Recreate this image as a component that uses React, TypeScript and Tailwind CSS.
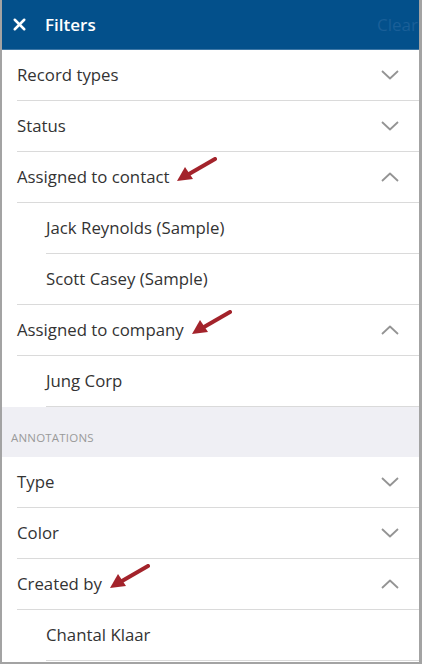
import { X } from 'lucide-react';

type Row = { label: string; open?: boolean; arrow?: boolean; items?: string[] };

const records: Row[] = [
  { label: 'Record types' },
  { label: 'Status' },
  { label: 'Assigned to contact', open: true, arrow: true, items: ['Jack Reynolds (Sample)', 'Scott Casey (Sample)'] },
  { label: 'Assigned to company', open: true, arrow: true, items: ['Jung Corp'] },
];

const annotations: Row[] = [
  { label: 'Type' },
  { label: 'Color' },
  { label: 'Created by', open: true, arrow: true, items: ['Chantal Klaar'] },
];

function Chevron({ up }: { up?: boolean }) {
  return (
    <svg width="18" height="10" viewBox="0 0 18 10" className="text-[#949494]">
      <path
        d={up ? 'M1 9 L9 1.5 L17 9' : 'M1 1 L9 8.5 L17 1'}
        fill="none"
        stroke="currentColor"
        strokeWidth="1.8"
        strokeLinejoin="round"
      />
    </svg>
  );
}

function Arrow() {
  return (
    <svg width="40" height="26" viewBox="0 0 40 26" className="absolute left-full top-[-7px] ml-[8px]">
      <line x1="38" y1="2" x2="12" y2="17" stroke="#a3232b" strokeWidth="4" strokeLinecap="round" />
      <polygon points="0,24 8,10 16,22" fill="#a3232b" />
    </svg>
  );
}

function Section({ rows }: { rows: Row[] }) {
  return (
    <div className="flex flex-col">
      {rows.map((r) => (
        <div key={r.label} className="flex flex-col">
          <div className="ml-[15px] h-[51px] flex items-center justify-between pr-[20px] border-b border-[#dadada]">
            <span className="relative text-[16.8px] text-[#333333]">
              {r.label}
              {r.arrow && <Arrow />}
            </span>
            <Chevron up={r.open} />
          </div>
          {r.items?.map((it, i) => {
            const last = i === r.items!.length - 1;
            const wide = last && r.label === 'Assigned to contact';
            return (
              <div
                key={it}
                className={
                  'h-[51px] flex items-center border-b border-[#dadada] ' +
                  (wide ? 'ml-[15px] pl-[29px]' : 'ml-[44px]')
                }
              >
                <span className="text-[16.8px] text-[#333333]">{it}</span>
              </div>
            );
          })}
        </div>
      ))}
    </div>
  );
}

export default function App() {
  return (
    <div
      className="w-[422px] h-[664px] overflow-hidden bg-white border-l-2 border-r-[3px] border-b-2 border-[#a3a3a3] flex flex-col"
      style={{ fontFamily: '"Open Sans", "Noto Sans", sans-serif' }}
    >
      <div className="h-[50px] shrink-0 bg-[#03508b] border-b border-[#3d77a6] flex items-center">
        <X className="w-[19px] h-[19px] text-white ml-[8px]" strokeWidth={3.2} />
        <span className="ml-[16px] text-[17px] font-semibold text-white">Filters</span>
        <span className="ml-auto mr-[1px] text-[17px] text-[#1a5f98] whitespace-nowrap">Clear</span>
      </div>
      <Section rows={records} />
      <div className="h-[50px] shrink-0 bg-[#efeff4] flex items-end pb-[11px] pl-[9px]">
        <span className="text-[11.5px] text-[#9a9a9a] uppercase tracking-[0.2px]">Annotations</span>
      </div>
      <Section rows={annotations} />
    </div>
  );
}
